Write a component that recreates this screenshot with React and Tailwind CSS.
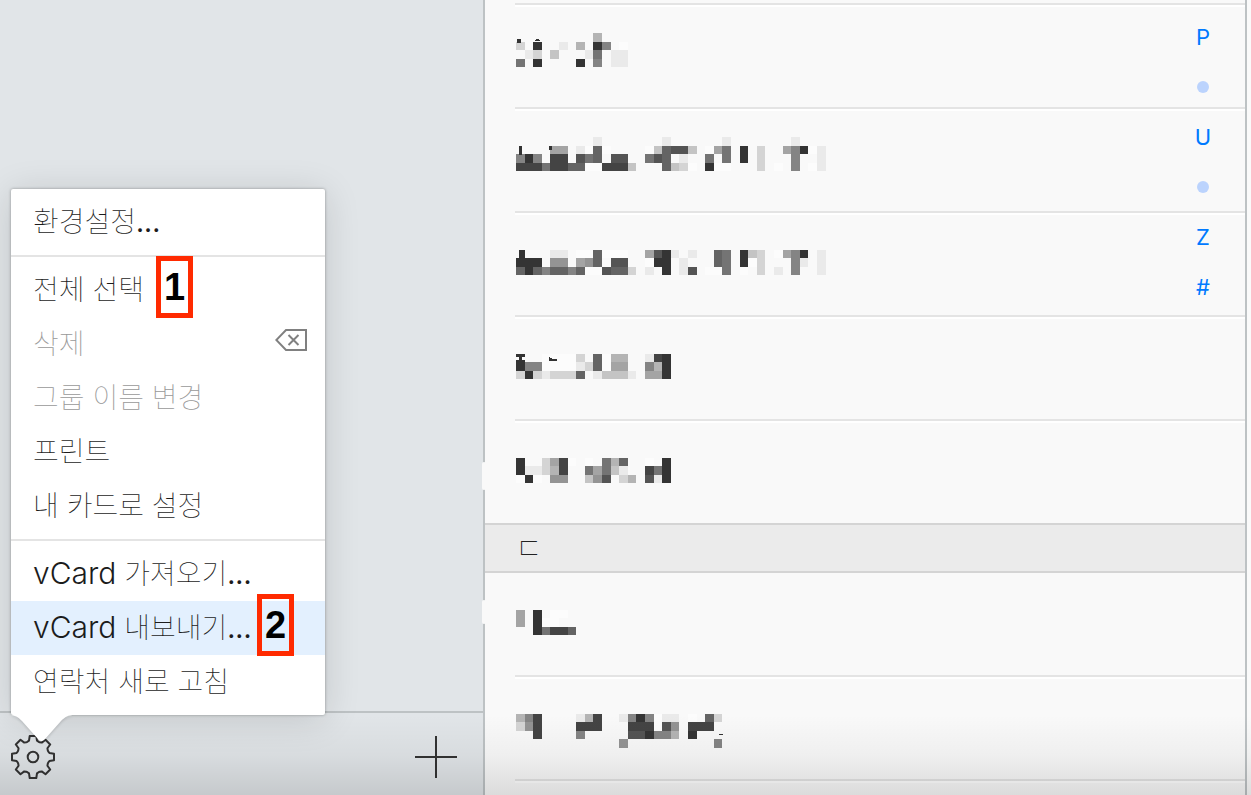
import { useState } from 'react';

// Masked names: one string per line of blocks, hex digit = gray level, "." = empty
const contacts = [
    {
        id: 1,
        blocks: [
            '.........b...',
            'd.3..e.b.38.f',
            '.ed.c...e7.ee',
            '7.3....3.8.ee',
        ],
        marks: 'M.5 6h4v4h-4z M18 8l3-2.500 4 2.500z',
    },
    {
        id: 2,
        blocks: [
            '.........e.......e......e.......e...',
            '....aa.ef6f....fc655c.fa7.3.d..a83fe',
            '838.44.576.55..756.e..7.7.3.d...8..e',
            '44474466ff444c...6cdf.3ff...d.f.8.fe',
        ],
        marks: 'M2.8 8.6h3v9h-3z M33 8.6h3v4h-3z',
    },
    {
        id: 3,
        blocks: [
            '....................................',
            '....ee.ff6fff..a53e.e..67.3cd.fa83.e',
            '333.99.a96.55..f33.e...67.3fd...8e.e',
            '63686686ff566d.e.3.e5.ff7.f.d.e.8..e',
        ],
        marks: 'M3 8.6h5.6v9H3z',
    },
    {
        id: 4,
        blocks: [
            '..................',
            '...ffffd.6fbb..e43',
            '388ffffed6faa..8b3',
            'd3deddd6.eccce.aa3',
        ],
        marks: 'M0 8.6h8.6v3H6v3.5h2.6v2H0v-2h3v-3.5H0z M33 12l3 1.5 5 .5v1.5l-4 1-4-.5z',
    },
    {
        id: 5,
        smudge: 'top-[41px] h-7',
        blocks: [
            '..................',
            '3..da4f.f.7b6..f.3',
            '3eedb4..7a7ce..473',
            'f3f.99..c95.db.5e3',
        ],
    },
];

const contactsD = [
    {
        id: 6,
        smudge: 'top-[27px] h-6',
        blocks: [
            '.......',
            'a.3.ff.',
            'a.3ff..',
            '..37446',
        ],
    },
    {
        id: 7,
        blocks: [
            '........................',
            'b84....eb4..e838fee.f.6d',
            'd94....444...444f59.444.',
            '..4....8.....55388b.3...',
            '............9..........8',
        ],
        marks: 'M202 30l3-1.2h2v1.6h-3z',
    },
];

const indexLetters = ['P', '', 'U', '', 'Z', '#'];

const menu = [
    [{ label: '환경설정', dots: true }],
    [
        { label: '전체 선택', badge: '1', badgePos: 'left-[145px]' },
        { label: '삭제', disabled: true, icon: true },
        { label: '그룹 이름 변경', disabled: true },
        { label: '프린트' },
        { label: '내 카드로 설정' },
    ],
    [
        { prefix: 'vCard', label: ' 가져오기', dots: true },
        { prefix: 'vCard', label: ' 내보내기', dots: true, badge: '2', badgePos: 'left-[246px]' },
        { label: '연락처 새로 고침' },
    ],
];

const CELL = 8.6;

function MaskedName({ blocks, marks }) {
    return (
        <svg width="310" height="43" viewBox="0 0 310 43" shapeRendering="crispEdges" aria-hidden="true">
            {blocks.map((line, y) =>
                line.split('').map((c, x) => {
                    if (c === '.') return null;
                    const g = parseInt(c, 16) * 16 + (c === 'e' ? 10 : c === 'f' ? 12 : 4);
                    return (
                        <rect
                            key={`${x}-${y}`}
                            x={x * CELL}
                            y={y * CELL}
                            width={CELL}
                            height={CELL}
                            fill={`rgb(${g},${g},${g})`}
                        />
                    );
                })
            )}
            {marks && <path d={marks} fill="#333" />}
        </svg>
    );
}

function ContactRow({ contact, last }) {
    return (
        <li className={`relative ml-[30px] pt-[28px] pl-px ${last ? 'h-[102px]' : 'h-[104px] border-b-2 border-[#e4e4e4] shadow-[0_2px_0_#fff]'}`}>
            {contact.smudge && (
                <span className={`absolute left-[-33px] w-1 rounded-sm bg-[#f9f9f9] ${contact.smudge}`} />
            )}
            <MaskedName blocks={contact.blocks} marks={contact.marks} />
        </li>
    );
}

function GearIcon() {
    // one tooth, repeated 8 times around the center
    const tooth = [[-5.6, -15.2], [-4, -16.4], [-3.3, -21], [3.3, -21], [4, -16.4], [5.6, -15.2]];
    const points = [];
    for (let i = 0; i < 8; i++) {
        const a = (i * Math.PI) / 4;
        tooth.forEach(([x, y]) => {
            points.push(`${x * Math.cos(a) - y * Math.sin(a)},${x * Math.sin(a) + y * Math.cos(a)}`);
        });
    }
    return (
        <svg width="44" height="44" viewBox="-22 -22 44 44" fill="none" stroke="#333" strokeWidth="2" strokeLinejoin="round">
            <polygon points={points.join(' ')} />
            <circle r="5.3" />
        </svg>
    );
}

function DeleteIcon() {
    return (
        <svg className="mb-2" width="32" height="22" viewBox="0 0 32 22" fill="none" stroke="#808080" strokeWidth="2">
            <path d="M11 1H31V21H11L1.3 11Z" />
            <path d="M13.5 6L23.5 16M23.5 6L13.5 16" />
        </svg>
    );
}

function SettingsMenu({ selected, onSelect }) {
    return (
        <div className="absolute bottom-[80px] left-[11px] z-10 w-[314px] rounded-xs bg-white shadow-[0_0_3px_rgba(0,0,0,0.35),0_4px_36px_rgba(0,0,0,0.14)]">
            {menu.map((group, i) => (
                <div key={i} className={`py-[6px] ${i > 0 ? 'border-t-2 border-[#e4e4e4]' : ''}`}>
                    {group.map((item) => (
                        <button
                            key={item.label}
                            type="button"
                            disabled={item.disabled}
                            onClick={() => onSelect(item.label)}
                            className={`relative flex h-[54px] w-full items-center justify-between pr-[18px] pl-[22px] text-left text-[28px] font-thin whitespace-nowrap ${item.disabled ? 'text-[#999]' : 'text-[#1c1c1c]'} ${selected === item.label ? 'bg-[#e3f0fe]' : ''}`}
                        >
                            <span>
                                {item.prefix && <span className="text-[30px] leading-none font-light">{item.prefix}</span>}
                                {item.label}
                                {item.dots && <span className="font-normal">...</span>}
                            </span>
                            {item.icon && <DeleteIcon />}
                            {item.badge && (
                                <span className={`absolute top-[-7px] z-10 flex h-[62px] w-[37px] items-center justify-center border-[5px] border-[#ff2a00] font-['Liberation_Sans',sans-serif] text-[38px] font-bold text-black ${item.badgePos}`}>
                                    {item.badge}
                                </span>
                            )}
                        </button>
                    ))}
                </div>
            ))}
            <svg className="absolute top-full left-0 drop-shadow-[0_2px_1px_rgba(0,0,0,0.12)]" width="64" height="27" viewBox="0 0 64 27">
                <path d="M0 0C6 1 8 3 11 6L27 24Q30.500 28 34 24L50 6C54 2 57 0 64 0Z" fill="#fff" />
            </svg>
        </div>
    );
}

export default function App() {
    const [selected, setSelected] = useState(' 내보내기');

    return (
        <div className="relative flex h-screen overflow-hidden bg-[#f9f9f9] font-['Inter','Noto_Sans_CJK_KR',sans-serif]">
            {/* Groups */}
            <aside className="relative flex w-[485px] shrink-0 flex-col border-r-2 border-[#bdc2c4] bg-[#e1e5e8]">
                <div className="flex-1" />
                <SettingsMenu selected={selected} onSelect={setSelected} />
                <div className="flex h-[84px] items-center justify-between border-t-2 border-[#bdc2c4] pt-[6px] pr-[26px] pl-[11px]">
                    <button type="button" aria-label="설정">
                        <GearIcon />
                    </button>
                    <button type="button" aria-label="추가">
                        <svg width="42" height="42" viewBox="0 0 42 42" stroke="#333" strokeWidth="2">
                            <path d="M21 0V42M0 21H42" />
                        </svg>
                    </button>
                </div>
            </aside>

            {/* Contact list */}
            <main id="list" className="relative min-w-0 flex-1 border-r-2 border-[#bdc2c4]">
                <div className="ml-[30px] h-[5px] border-b-2 border-[#e4e4e4] shadow-[0_2px_0_#fff]" />
                <ul>
                    {contacts.map((c, i) => <ContactRow key={c.id} contact={c} last={i === contacts.length - 1} />)}
                </ul>
                <h2 className="flex h-[50px] items-center border-y-2 border-[#d4d4d4] bg-[#ebebeb] pl-[30px] text-[30px] font-thin text-[#222]">ㄷ</h2>
                <ul>
                    {contactsD.map((c) => <ContactRow key={c.id} contact={c} />)}
                </ul>
                <nav className="absolute top-[12px] right-[26px] flex w-8 flex-col text-[22px] text-[#007aff]">
                    {indexLetters.map((letter, i) => (
                        <a key={i} href="#list" className="flex h-[50px] items-center justify-center">
                            {letter || <span className="size-3 rounded-full bg-[#bbd3fd]" />}
                        </a>
                    ))}
                </nav>
            </main>
            <div className="w-1 shrink-0 bg-[#fafafa]" />

            <div className="pointer-events-none absolute inset-x-0 bottom-0 h-20 bg-linear-to-b from-transparent via-black/4 to-black/12" />
        </div>
    );
}
